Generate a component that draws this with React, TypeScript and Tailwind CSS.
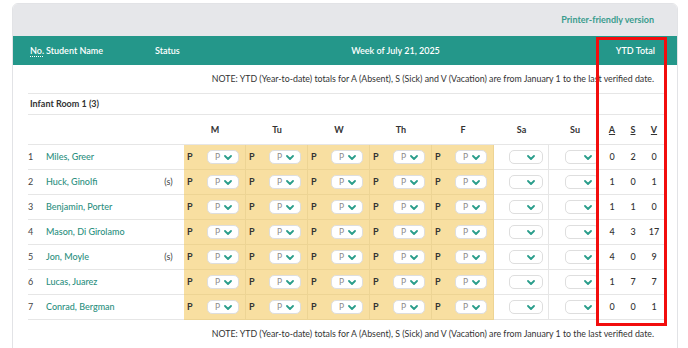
import React from "react";

type Student = { no: number; name: string; status?: string; ytd: [number, number, number] };

const students: Student[] = [
  { no: 1, name: "Miles, Greer", ytd: [0, 2, 0] },
  { no: 2, name: "Huck, Ginolfi", status: "(s)", ytd: [1, 0, 1] },
  { no: 3, name: "Benjamin, Porter", ytd: [1, 1, 0] },
  { no: 4, name: "Mason, Di Girolamo", ytd: [4, 3, 17] },
  { no: 5, name: "Jon, Moyle", status: "(s)", ytd: [4, 0, 9] },
  { no: 6, name: "Lucas, Juarez", ytd: [1, 7, 7] },
  { no: 7, name: "Conrad, Bergman", ytd: [0, 0, 1] },
];

const weekdays = ["M", "Tu", "W", "Th", "F"];
const cols = "grid grid-cols-[18px_105px_33px_62px_62px_62px_62px_62px_55px_52px_22px_20px_22px]";
const note =
  "NOTE: YTD (Year-to-date) totals for A (Absent), S (Sick) and V (Vacation) are from January 1 to the last verified date.";

function Chevron() {
  return (
    <svg width="8" height="5" viewBox="0 0 8 5" className="shrink-0">
      <path d="M1 1l3 3 3-3" fill="none" stroke="#2a9d8b" strokeWidth="1.8" strokeLinecap="round" strokeLinejoin="round" />
    </svg>
  );
}

function Select({ value, className }: { value?: string; className?: string }) {
  return (
    <div
      className={`h-[14px] rounded-[5px] bg-white border border-[#dedede] flex items-center justify-end gap-[4px] pr-[6px] ${className ?? ""}`}
    >
      {value && <span className="text-[8.5px] text-[#8a8a8a] leading-none">{value}</span>}
      <Chevron />
    </div>
  );
}

export default function App() {
  return (
    <div className="w-[688px] h-[348px] bg-white overflow-hidden font-[Lato,sans-serif] text-[9px] text-[#333] relative">
      <div className="ml-[12px] mt-[3px] w-[666px] border border-[#e2e3e6] rounded-t-[6px] overflow-hidden">
        <div className="h-[32px] bg-[#e6e7ea] flex items-center justify-end pr-[23px]">
          <span className="font-bold text-[#3a9c8d] text-[9px]">Printer-friendly version</span>
        </div>
        <div className="h-[29px] bg-[#24978a] text-white font-semibold pl-[15px] pr-[13px]">
          <div className="grid grid-cols-[18px_138px_417px_64px] h-full items-center">
            <span className="underline decoration-dotted underline-offset-2 pl-[2px]">No.</span>
            <div className="flex">
              <span className="w-[109px]">Student Name</span>
              <span>Status</span>
            </div>
            <span className="text-center pl-[6px]">Week of July 21, 2025</span>
            <span className="text-right pr-[10px]">YTD Total</span>
          </div>
        </div>
        <div className="pl-[15px] pr-[13px]">
          <div className="h-[29px] flex items-center justify-end pr-[10px] text-[8.8px] border-b border-[#e6e6e6]">{note}</div>
          <div className="h-[21px] flex items-center pl-[2px] font-bold border-b border-[#e6e6e6]">Infant Room 1 (3)</div>
          <div className={`${cols} h-[30px] items-center font-bold border-b border-[#e6e6e6]`}>
            <span />
            <span />
            <span />
            {weekdays.map((d) => (
              <span key={d} className="text-center">{d}</span>
            ))}
            <span className="text-center">Sa</span>
            <span className="text-center">Su</span>
            <span className="text-center underline">A</span>
            <span className="text-center underline">S</span>
            <span className="text-center underline">V</span>
          </div>
          {students.map((s) => (
            <div key={s.no} className={`${cols} h-[25px]`}>
              <div className="flex items-center border-b border-[#e6e6e6] text-[#444]">{s.no}</div>
              <div className="flex items-center border-b border-[#e6e6e6] text-[#2b8f80] font-medium">{s.name}</div>
              <div className="flex items-center justify-center pl-[2px] border-b border-[#e6e6e6] text-[#444]">{s.status}</div>
              {weekdays.map((d) => (
                <div key={d} className="flex items-center bg-[#f8dfa1] border-b border-r border-[#edd494]">
                  <span className="font-bold pl-[3px] w-[23px]">P</span>
                  <Select value="P" className="w-[32px]" />
                </div>
              ))}
              <div className="flex items-center border-b border-r border-[#e6e6e6]">
                <Select className="w-[34px] ml-[15px] pr-[7px]" />
              </div>
              <div className="flex items-center border-b border-[#e6e6e6]">
                <Select className="w-[34px] ml-[16px] pr-[5px]" />
              </div>
              {s.ytd.map((n, i) => (
                <div key={i} className="flex items-center justify-center border-b border-[#e6e6e6] font-medium">{n}</div>
              ))}
            </div>
          ))}
          <div className="h-[28px] flex items-center justify-end pr-[10px] text-[8.8px]">{note}</div>
        </div>
      </div>
      <div className="absolute left-[596px] top-[37px] w-[71px] h-[289px] border-[3px] border-[#f20d0d]" />
    </div>
  );
}
